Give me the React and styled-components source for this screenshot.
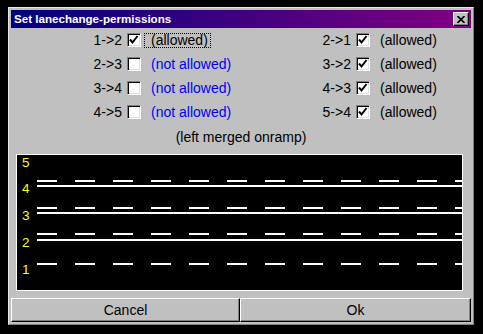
import React from 'react';
import styled, { createGlobalStyle } from 'styled-components';

const Global = createGlobalStyle`
  html, body { margin: 0; padding: 0; background: #000; }
  body { font-family: "Liberation Sans", Arial, sans-serif; }
`;

const Screen = styled.div`
  width: 483px;
  height: 334px;
  box-sizing: border-box;
  padding: 7px 0 0 8px;
  background: #000;
  overflow: hidden;
`;

const Window = styled.div`
  width: 466px;
  height: 318px;
  box-sizing: border-box;
  background: #c0c0c0;
  border: 1px solid;
  border-color: #e8e8e8 #808080 #808080 #e8e8e8;
  padding: 2px;
  display: flex;
  flex-direction: column;
`;

const TitleBar = styled.div`
  height: 18px;
  flex: none;
  display: flex;
  align-items: center;
  justify-content: space-between;
  padding: 0 2px 0 3px;
  background: linear-gradient(to right, #000080, #810081);
`;

const Title = styled.span`
  color: #fff;
  font-weight: bold;
  font-size: 11.6px;
  line-height: 18px;
`;

const CloseButton = styled.div`
  width: 16px;
  height: 14px;
  box-sizing: border-box;
  background: #c0c0c0;
  border: 1px solid;
  border-color: #fff #000 #000 #fff;
  box-shadow: inset -1px -1px #808080;
  display: flex;
  align-items: center;
  justify-content: center;
`;

const PermGrid = styled.div`
  display: grid;
  grid-template-columns: 229px 1fr;
  flex: none;
`;

const Column = styled.div`
  display: flex;
  flex-direction: column;
`;

const Row = styled.div`
  height: 24px;
  display: flex;
  align-items: center;
  font-size: 14px;
`;

const Label = styled.span`
  width: 111px;
  text-align: right;
  margin-right: 5px;
  color: #000;
`;

const Box = styled.span`
  width: 14px;
  height: 14px;
  box-sizing: border-box;
  background: #fff;
  border: 1px solid;
  border-color: #808080 #fff #fff #808080;
  box-shadow: inset 1px 1px #000, inset -1px -1px #dfdfdf;
  display: flex;
  align-items: center;
  justify-content: center;
`;

const Status = styled.span`
  margin-left: ${p => (p.$focused ? '3px' : '10px')};
  padding: ${p => (p.$focused ? '0 2px 0 6px' : '0')};
  border: ${p => (p.$focused ? '1px dotted #000' : 'none')};
  line-height: 13px;
  color: ${p => (p.$allowed ? '#000' : '#0000ff')};
`;

const Subtitle = styled.div`
  height: 26px;
  line-height: 26px;
  margin-bottom: 4px;
  text-align: center;
  font-size: 14px;
  color: #000;
  flex: none;
`;

const Road = styled.div`
  height: 137px;
  margin: 0 8px 0 5px;
  box-sizing: border-box;
  border: 1px solid #fff;
  background: #000;
  flex: none;
  svg { display: block; }
`;

const ButtonBar = styled.div`
  display: grid;
  grid-template-columns: 229px 1fr;
  margin-top: 7px;
  height: 24px;
  flex: none;
`;

const Button = styled.div`
  box-sizing: border-box;
  height: 24px;
  background: #c0c0c0;
  border: 1px solid;
  border-color: #fff #000 #000 #fff;
  box-shadow: inset -1px -1px #808080;
  display: flex;
  align-items: center;
  justify-content: center;
  font-size: 14px;
  color: #000;
`;

const Check = () => (
  <svg width="10" height="10" viewBox="0 0 10 10">
    <path d="M1 4.5 L3.5 7.5 L8.5 1" stroke="#000" strokeWidth="2" fill="none" />
  </svg>
);

const left = [
  { label: '1->2', checked: true, focused: true },
  { label: '2->3', checked: false },
  { label: '3->4', checked: false },
  { label: '4->5', checked: false },
];
const right = [
  { label: '2->1', checked: true },
  { label: '3->2', checked: true },
  { label: '4->3', checked: true },
  { label: '5->4', checked: true },
];

const PermRow = ({ label, checked, focused }) => (
  <Row>
    <Label>{label}</Label>
    <Box>{checked && <Check />}</Box>
    <Status $allowed={checked} $focused={focused}>
      {checked ? '(allowed)' : '(not allowed)'}
    </Status>
  </Row>
);

const W = 445;
const dashXs = [];
for (let x = 20; x < W; x += 38) dashXs.push(x);

const DashedLine = ({ y }) => (
  <g fill="#fff">
    {dashXs.map(x => (
      <rect key={x} x={x} y={y} width={Math.min(20, W - x)} height="2" />
    ))}
  </g>
);

const SolidLine = ({ y }) => <rect x="20" y={y} width={W - 20} height="2" fill="#fff" />;

const lanes = [
  { n: '5', y: 12 },
  { n: '4', y: 38 },
  { n: '3', y: 65 },
  { n: '2', y: 92 },
  { n: '1', y: 119 },
];

const RoadDrawing = () => (
  <svg width={W} height="135" viewBox={`0 0 ${W} 135`}>
    <DashedLine y={25} />
    <SolidLine y={30} />
    <DashedLine y={52} />
    <SolidLine y={57} />
    <DashedLine y={78} />
    <SolidLine y={84} />
    <DashedLine y={108} />
    {lanes.map(l => (
      <text
        key={l.n}
        x="5"
        y={l.y}
        fill="#ffff00"
        fontSize="13.5"
        fontFamily="Liberation Sans, Arial, sans-serif"
      >
        {l.n}
      </text>
    ))}
  </svg>
);

export default function App() {
  return (
    <>
      <Global />
      <Screen>
        <Window>
          <TitleBar>
            <Title>Set lanechange-permissions</Title>
            <CloseButton>
              <svg width="8" height="7" viewBox="0 0 8 7">
                <path d="M0.5 0 L7.5 7 M7.5 0 L0.5 7" stroke="#000" strokeWidth="1.6" />
              </svg>
            </CloseButton>
          </TitleBar>
          <PermGrid>
            <Column>
              {left.map(r => (
                <PermRow key={r.label} {...r} />
              ))}
            </Column>
            <Column>
              {right.map(r => (
                <PermRow key={r.label} {...r} />
              ))}
            </Column>
          </PermGrid>
          <Subtitle>(left merged onramp)</Subtitle>
          <Road>
            <RoadDrawing />
          </Road>
          <ButtonBar>
            <Button>Cancel</Button>
            <Button>Ok</Button>
          </ButtonBar>
        </Window>
      </Screen>
    </>
  );
}
